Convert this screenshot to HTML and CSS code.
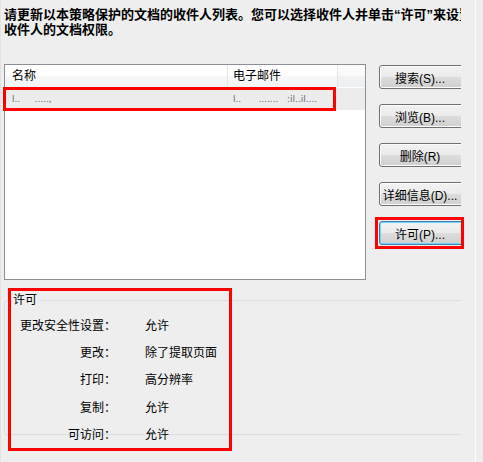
FILE: index.html
```
<!DOCTYPE html>
<html>
<head>
    <title>收件人列表</title>
    <link rel="stylesheet" href="styles.css">
</head>
<body>
    <div class="dialog">
        <div class="pane">
            <p class="intro">
                <span class="intro-line">请更新以本策略保护的文档的收件人列表。您可以选择收件人并单击“许可”来设置</span>
                <span class="intro-line">收件人的文档权限。</span>
            </p>

            <div class="recipients">
                <div class="list">
                    <div class="list-head">
                        <span class="col col-name">名称</span>
                        <span class="col col-mail">电子邮件</span>
                        <span class="col col-rest"></span>
                    </div>
                    <div class="list-row">
                        <span class="cell cell-name">l..&nbsp;&nbsp;&nbsp;&nbsp;&nbsp;.....,</span>
                        <span class="cell cell-mail">l..&nbsp;&nbsp;&nbsp;&nbsp;&nbsp;&nbsp;.......&nbsp;&nbsp;&nbsp;:il..il....</span>
                    </div>
                </div>

                <div class="actions">
                    <button class="btn">搜索(S)...</button>
                    <button class="btn">浏览(B)...</button>
                    <button class="btn">删除(R)</button>
                    <button class="btn">详细信息(D)...</button>
                    <button class="btn btn-default">许可(P)...</button>
                </div>
            </div>

            <fieldset class="perms">
                <legend>许可</legend>
                <div class="perm-row"><span class="perm-label">更改安全性设置：</span><span class="perm-value">允许</span></div>
                <div class="perm-row"><span class="perm-label">更改：</span><span class="perm-value">除了提取页面</span></div>
                <div class="perm-row"><span class="perm-label">打印：</span><span class="perm-value">高分辨率</span></div>
                <div class="perm-row"><span class="perm-label">复制：</span><span class="perm-value">允许</span></div>
                <div class="perm-row"><span class="perm-label">可访问：</span><span class="perm-value">允许</span></div>
            </fieldset>
        </div>

        <!-- red annotation boxes drawn over the dialog -->
        <div class="mark mark-row"></div>
        <div class="mark mark-btn"></div>
        <div class="mark mark-group"></div>
    </div>
</body>
</html>
```

FILE: styles.css
```
body {
    margin: 0;
    background-color: #eeeeee;
    font-family: "Liberation Sans", "Noto Sans CJK SC", sans-serif;
    font-size: 12px;
    color: #000;
}

.dialog {
    position: relative;
    width: 475px;
    height: 462px;
    border-right: 1px solid #fbfbfb;
    box-shadow: 1px 0 0 #e2e2e2 inset;
}

.pane {
    width: 461px;
    height: 462px;
    overflow: hidden;
}

.intro {
    margin: 0;
    padding: 7px 0 0 4px;
    font-size: 13px;
    font-weight: bold;
    line-height: 15px;
}

.intro-line {
    display: block;
    white-space: nowrap;
}

.recipients {
    display: flex;
    align-items: flex-start;
    margin-top: 27px;
    padding-left: 4px;
}

.list {
    flex-shrink: 0;
    width: 360px;
    height: 214px;
    background-color: #fff;
    border: 1px solid #8e8f96;
}

.list-head {
    display: flex;
    height: 22px;
    background: linear-gradient(#ffffff 0%, #ffffff 50%, #f6f7f8 50%, #f3f4f5 100%);
}

.col {
    display: flex;
    align-items: center;
    box-sizing: border-box;
    line-height: 22px;
    border-right: 1px solid #e3e4e6;
}

.col-name {
    width: 223px;
    padding-left: 7px;
}

.col-mail {
    width: 110px;
    padding-left: 5px;
}

.col-rest {
    flex: 1;
    border-right: none;
    background: linear-gradient(#fafafa 0%, #fafafa 50%, #f1f2f3 50%, #eeeff0 100%);
}

.list-row {
    display: flex;
    height: 22px;
    margin-top: 1px;
    background-color: #ececec;
    font-family: "DejaVu Sans", sans-serif;
    font-size: 9px;
    line-height: 22px;
    color: #6a6a6a;
}

.cell-name {
    width: 223px;
    padding-left: 7px;
    box-sizing: border-box;
}

.cell-mail {
    padding-left: 5px;
}

.actions {
    flex-shrink: 0;
    display: flex;
    flex-direction: column;
    gap: 15px;
    margin: 1px 0 0 13px;
}

.btn {
    width: 86px;
    height: 24px;
    padding: 0 4px 0 0;
    font-family: "Liberation Sans", "Noto Sans CJK SC", sans-serif;
    font-size: 12px;
    color: #000;
    border: 1px solid #707070;
    border-radius: 3px;
    background: linear-gradient(#f2f2f2 0%, #ebebeb 50%, #dddddd 50%, #cfcfcf 100%);
    box-shadow: 0 0 0 1px #fcfcfc inset;
    white-space: nowrap;
}

.btn-default {
    border-color: #3c7fb1;
    box-shadow: 0 0 0 1px #6fd4f7 inset;
}

.perms {
    width: 480px;
    height: 138px;
    margin: 12px 0 0 4px;
    padding: 3px 0 0;
    border: 1px solid #d5dfe5;
    border-radius: 3px;
    box-sizing: content-box;
}

.perms legend {
    margin-left: 6px;
    padding: 0 2px;
    line-height: 16px;
}

.perm-row {
    display: flex;
    height: 27.2px;
    align-items: center;
}

.perm-label {
    width: 111px;
    text-align: right;
}

.perm-value {
    margin-left: 29px;
}

.mark {
    position: absolute;
    border: 3px solid #ff0000;
    box-sizing: border-box;
}

.mark-row {
    left: 3px;
    top: 87px;
    width: 333px;
    height: 24px;
}

.mark-btn {
    left: 375px;
    top: 217px;
    width: 89px;
    height: 32px;
}

.mark-group {
    left: 8px;
    top: 288px;
    width: 224px;
    height: 163px;
}
```
